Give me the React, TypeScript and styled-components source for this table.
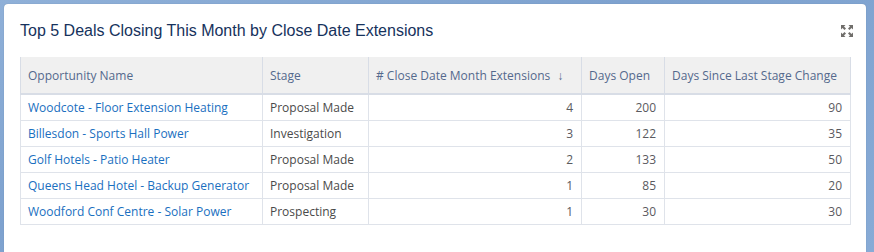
import styled, { createGlobalStyle } from "styled-components";

const GlobalStyle = createGlobalStyle`
  html, body {
    margin: 0;
    padding: 0;
  }
  body {
    width: 874px;
    height: 252px;
    overflow: hidden;
    background: linear-gradient(160deg, #8fb0d8 0%, #7ea2cf 40%, #88abd6 100%);
    font-family: "Open Sans", "Liberation Sans", sans-serif;
  }
`;

const Card = styled.div`
  margin: 4px 8px 0 4px;
  height: 260px;
  background: #fff;
  border-radius: 4px 4px 0 0;
  box-shadow: 0 0 1px rgba(0, 0, 0, 0.25);
  padding: 0 16px;
  box-sizing: border-box;
`;

const Header = styled.div`
  display: flex;
  align-items: center;
  justify-content: space-between;
  height: 53px;
  padding-top: 1px;
  box-sizing: border-box;
`;

const Title = styled.h2`
  margin: 0;
  font-family: "Liberation Sans", Arial, sans-serif;
  font-weight: normal;
  font-size: 16px;
  color: #16325c;
`;

const ExpandButton = styled.button`
  border: none;
  background: none;
  padding: 0;
  margin-right: -3px;
  display: flex;
  cursor: pointer;
`;

const Table = styled.table`
  width: 830px;
  border-collapse: collapse;
  table-layout: fixed;
  font-size: 12px;
  color: #4a4a4a;
`;

const Th = styled.th`
  height: 36px;
  padding: 0 7px;
  background: #f0f0f0;
  color: #54698d;
  font-weight: normal;
  text-align: left;
  border: 1px solid #d8dde6;
  border-top: none;
  border-bottom: 2px solid #d8dde6;
  white-space: nowrap;
`;

const Td = styled.td<{ $right?: boolean }>`
  height: 25px;
  padding: 0 8px 0 7px;
  border: 1px solid #dfe3ea;
  text-align: ${(p) => (p.$right ? "right" : "left")};
  white-space: nowrap;
  color: ${(p) => (p.$right ? "#5a5a60" : "#4a4a4a")};
`;

const Link = styled.a`
  color: #1a6fc0;
  text-decoration: none;
`;

const SortArrow = styled.span`
  margin-left: 7px;
  font-size: 12px;
`;

const deals = [
  { name: "Woodcote - Floor Extension Heating", stage: "Proposal Made", ext: 4, open: 200, since: 90 },
  { name: "Billesdon - Sports Hall Power", stage: "Investigation", ext: 3, open: 122, since: 35 },
  { name: "Golf Hotels - Patio Heater", stage: "Proposal Made", ext: 2, open: 133, since: 50 },
  { name: "Queens Head Hotel - Backup Generator", stage: "Proposal Made", ext: 1, open: 85, since: 20 },
  { name: "Woodford Conf Centre - Solar Power", stage: "Prospecting", ext: 1, open: 30, since: 30 },
];

const ExpandIcon = () => (
  <svg width="12" height="12" viewBox="0 0 12 12" fill="#706e6b">
    <path d="M0 0h4.5L3 1.5l2 2L3.5 5l-2-2L0 4.5z" />
    <path d="M12 0v4.5L10.5 3l-2 2L7 3.5l2-2L7.5 0z" />
    <path d="M0 12V7.5L1.5 9l2-2L5 8.5l-2 2L4.5 12z" />
    <path d="M12 12H7.5L9 10.5l-2-2L8.5 7l2 2L12 7.5z" />
  </svg>
);

const App = () => {
  return (
    <>
      <GlobalStyle />
      <Card>
        <Header>
          <Title>Top 5 Deals Closing This Month by Close Date Extensions</Title>
          <ExpandButton aria-label="Expand">
            <ExpandIcon />
          </ExpandButton>
        </Header>
        <Table>
          <colgroup>
            <col style={{ width: 242 }} />
            <col style={{ width: 106 }} />
            <col style={{ width: 213 }} />
            <col style={{ width: 83 }} />
            <col style={{ width: 186 }} />
          </colgroup>
          <thead>
            <tr>
              <Th>Opportunity Name</Th>
              <Th>Stage</Th>
              <Th>
                # Close Date Month Extensions<SortArrow>↓</SortArrow>
              </Th>
              <Th>Days Open</Th>
              <Th>Days Since Last Stage Change</Th>
            </tr>
          </thead>
          <tbody>
            {deals.map((d) => (
              <tr key={d.name}>
                <Td>
                  <Link href="#">{d.name}</Link>
                </Td>
                <Td>{d.stage}</Td>
                <Td $right>{d.ext}</Td>
                <Td $right>{d.open}</Td>
                <Td $right>{d.since}</Td>
              </tr>
            ))}
          </tbody>
        </Table>
      </Card>
    </>
  );
};

export default App;
